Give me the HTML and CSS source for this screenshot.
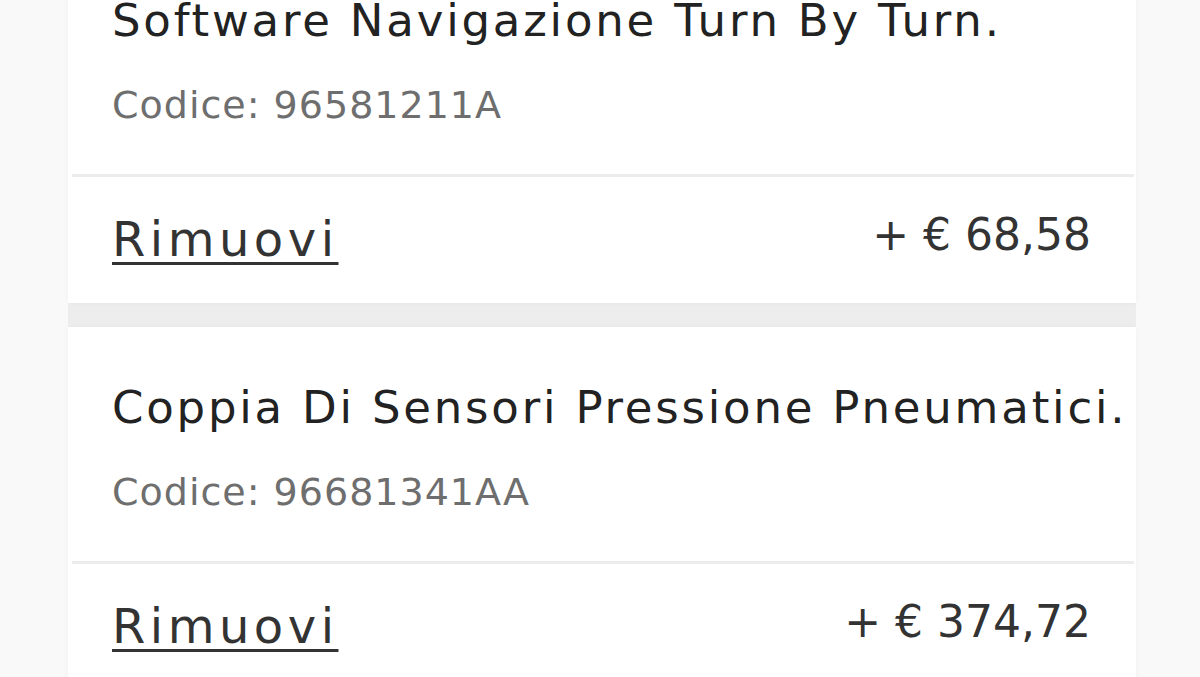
FILE: index.html
```html
<!DOCTYPE html>
<html lang="it">
<head>
<meta charset="utf-8">
<title>Accessori</title>
<link rel="stylesheet" href="styles.css">
</head>
<body>
<div class="page">
  <div class="list">
    <section class="card">
      <div class="info">
        <h3 class="name">Software Navigazione Turn By Turn.</h3>
        <p class="code">Codice: 96581211A</p>
      </div>
      <div class="actions">
        <a class="remove" href="#">Rimuovi</a>
        <span class="price">+ € 68,58</span>
      </div>
    </section>
    <section class="card">
      <div class="info">
        <h3 class="name">Coppia Di Sensori Pressione Pneumatici.</h3>
        <p class="code">Codice: 96681341AA</p>
      </div>
      <div class="actions">
        <a class="remove" href="#">Rimuovi</a>
        <span class="price">+ € 374,72</span>
      </div>
    </section>
  </div>
</div>
</body>
</html>
```
FILE: styles.css
```css
html, body {
  margin: 0;
  padding: 0;
  background: #f9f9f9;
  overflow: hidden;
}
body {
  font-family: "DejaVu Sans", "Noto Sans", sans-serif;
  color: #222;
}
.page {
  padding: 0 64px 0 68px;
}
.list {
  margin-top: -60px;
  display: flex;
  flex-direction: column;
  gap: 24px;
  background: #ededed;
}
.card {
  background: #fff;
  box-shadow: 0 0 6px rgba(0,0,0,0.04);
}
.info {
  margin: 0 2px 0 4px;
  padding: 54px 20px 45px 40px;
  border-bottom: 3px solid #ececec;
}
.name {
  margin: 0;
  font-weight: 400;
  font-size: 45px;
  line-height: 54px;
  letter-spacing: 2.8px;
  color: #222;
  white-space: nowrap;
}
.code {
  margin: 33px 0 0;
  font-size: 38px;
  line-height: 48px;
  letter-spacing: 1px;
  color: #6e6e6e;
}
.actions {
  display: flex;
  justify-content: space-between;
  align-items: flex-start;
  padding: 34px 45px 36px 44px;
}
.remove {
  font-size: 48px;
  line-height: 56px;
  letter-spacing: 4.5px;
  color: #333;
  text-decoration: underline;
  text-decoration-thickness: 3px;
  text-underline-offset: 6px;
}
.price {
  font-size: 44px;
  line-height: 48px;
  color: #333;
}
```
